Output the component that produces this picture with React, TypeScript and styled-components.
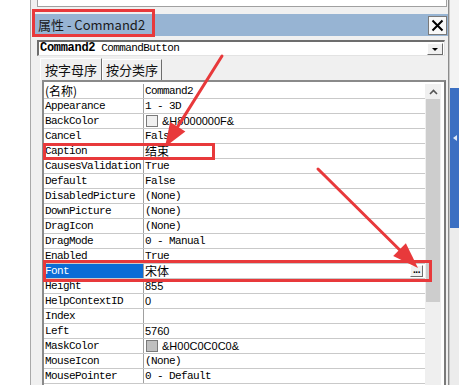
import React from "react";
import styled, { createGlobalStyle } from "styled-components";

const GlobalStyle = createGlobalStyle`
  html, body { margin: 0; padding: 0; background: #ffffff; }
  body { width: 459px; height: 385px; overflow: hidden; }
  * { box-sizing: border-box; }
`;

const MONO = `"Liberation Mono", "DejaVu Sans Mono", monospace`;
const CJK = `"Noto Sans CJK SC", "Noto Sans", sans-serif`;
const SANS = `"Liberation Sans", Arial, sans-serif`;
const RED = "#e8393b";

const Screen = styled.div`
  position: relative;
  width: 459px;
  height: 385px;
  overflow: hidden;
  display: flex;
  background: #ffffff;
`;

const LeftGap = styled.div`
  width: 30px;
  flex: none;
  background: #ffffff;
`;

const Panel = styled.div`
  width: 419px;
  flex: none;
  background: #f0f0f0;
  border-left: 1px solid #a9a9a9;
  border-right: 1px solid #8c8c8c;
  display: flex;
  flex-direction: column;
`;

const RightStrip = styled.div`
  flex: 1;
  display: flex;
  flex-direction: column;
  border-left: 1px solid #c8c8c8;
`;

const StripTop = styled.div`
  height: 88px;
  background: #f3f3f3;
`;

const StripBlue = styled.div`
  height: 140px;
  background: #3b6fc2;
  display: flex;
  align-items: center;
  justify-content: center;
  padding-bottom: 40px;
`;

const StripArrow = styled.div`
  width: 0;
  height: 0;
  border-top: 3px solid transparent;
  border-bottom: 3px solid transparent;
  border-right: 4px solid #dfe8f6;
`;

const StripBottom = styled.div`
  flex: 1;
  background: #ececec;
`;

const TopBox = styled.div`
  margin-left: 6px;
  width: 410px;
  height: 7px;
  background: #ffffff;
  border-left: 1px solid #a0a0a0;
  border-right: 1px solid #a0a0a0;
  border-bottom: 1px solid #a0a0a0;
`;

const TitleBar = styled.div`
  margin-top: 7px;
  margin-left: 2px;
  height: 22px;
  background: #97b4d3;
  display: flex;
  align-items: center;
  padding-left: 5px;
  padding-right: 1px;
`;

const TitleText = styled.div`
  flex: 1;
  font-family: ${CJK};
  font-size: 13px;
  color: #1a1a1a;
  line-height: 22px;
`;

const CloseButton = styled.div`
  width: 19px;
  height: 19px;
  background: #f8f8f8;
  border: 1px solid #7a7a7a;
  display: flex;
  align-items: center;
  justify-content: center;
`;

const Combo = styled.div`
  margin-top: 4px;
  margin-left: 6px;
  width: 408px;
  height: 16px;
  background: #ffffff;
  border-top: 2px solid #6d6d6d;
  border-left: 2px solid #6d6d6d;
  border-right: 1px solid #e3e3e3;
  border-bottom: 1px solid #e3e3e3;
  display: flex;
  align-items: center;
  padding-left: 1px;
`;

const ComboText = styled.div`
  flex: 1;
  font-family: ${MONO};
  font-size: 11px;
  letter-spacing: -0.6px;
  color: #000;
  white-space: pre;
  line-height: 13px;
`;

const ComboBold = styled.span`
  font-weight: bold;
  font-size: 12px;
  letter-spacing: -0.3px;
`;

const DropButton = styled.div`
  width: 16px;
  height: 12px;
  margin-right: 1px;
  background: #f0f0f0;
  border-top: 1px solid #ffffff;
  border-left: 1px solid #ffffff;
  border-right: 1px solid #6d6d6d;
  border-bottom: 1px solid #6d6d6d;
  display: flex;
  align-items: center;
  justify-content: center;
`;

const DropTriangle = styled.div`
  width: 0;
  height: 0;
  border-left: 3px solid transparent;
  border-right: 3px solid transparent;
  border-top: 3px solid #000;
  margin-top: 1px;
`;

const TabRow = styled.div`
  margin-top: 2px;
  margin-left: 9px;
  height: 22px;
  display: flex;
  align-items: stretch;
`;

const Tab = styled.div<{ $active?: boolean }>`
  padding: 0 ${(p) => (p.$active ? "4px" : "3px")};
  font-family: ${CJK};
  font-size: 13px;
  color: #111;
  display: flex;
  align-items: center;
  border-top: 1px solid #ffffff;
  border-left: 1px solid #ffffff;
  border-right: 1px solid #6d6d6d;
  margin-top: ${(p) => (p.$active ? "0" : "1px")};
  line-height: 20px;
`;

const Grid = styled.div`
  margin-left: 11px;
  width: 404px;
  flex: 1;
  border-top: 2px solid #8a8a8a;
  border-left: 2px solid #8a8a8a;
  border-right: 2px solid #7a7a7a;
  background: #ffffff;
  display: flex;
  padding-top: 2px;
  padding-right: 3px;
`;

const Rows = styled.div`
  width: 381px;
  display: flex;
  flex-direction: column;
`;

const Row = styled.div`
  height: 15px;
  flex: none;
  display: flex;
  border-bottom: 1px solid #c9c9c9;
`;

const NameCell = styled.div<{ $selected?: boolean }>`
  width: 100px;
  flex: none;
  display: flex;
  align-items: center;
  border-right: 1px solid #a0a0a0;
  background: ${(p) => (p.$selected ? "#0c6cd6" : "transparent")};
  color: ${(p) => (p.$selected ? "#ffffff" : "#000000")};
  font-family: ${MONO};
  font-size: 11px;
  letter-spacing: -0.6px;
  line-height: 14px;
  padding-left: 1px;
  white-space: nowrap;
`;

const ValueCell = styled.div`
  flex: 1;
  display: flex;
  align-items: center;
  padding-left: 1px;
  padding-right: 2px;
  font-family: ${MONO};
  font-size: 11px;
  letter-spacing: -0.6px;
  line-height: 14px;
  color: #000;
  white-space: nowrap;
`;

const CjkText = styled.span`
  font-family: ${CJK};
  font-size: 12px;
  letter-spacing: 0;
  line-height: 14px;
`;

const SansText = styled.span`
  font-family: ${SANS};
  font-size: 11px;
  letter-spacing: 0;
`;

const Swatch = styled.span<{ $color: string }>`
  display: inline-block;
  width: 12px;
  height: 12px;
  margin-right: 4px;
  margin-left: 1px;
  background: ${(p) => p.$color};
  border: 1px solid #7a7a7a;
  flex: none;
`;

const Spacer = styled.span`
  flex: 1;
`;

const EllipsisButton = styled.div`
  width: 13px;
  height: 12px;
  background: #f0f0f0;
  border-top: 1px solid #ffffff;
  border-left: 1px solid #ffffff;
  border-right: 1px solid #6d6d6d;
  border-bottom: 1px solid #6d6d6d;
  font-family: ${SANS};
  font-size: 10px;
  font-weight: bold;
  line-height: 8px;
  text-align: center;
  letter-spacing: -0.5px;
  color: #000;
`;

const ScrollBar = styled.div`
  width: 16px;
  flex: none;
  display: flex;
  flex-direction: column;
  background: #efefef;
`;

const ScrollUp = styled.div`
  height: 15px;
  background: #f0f0f0;
  display: flex;
  align-items: center;
  justify-content: center;
`;

const ScrollThumb = styled.div`
  height: 203px;
  margin: 0 1px;
  background: #cdcdcd;
`;

const Overlay = styled.svg`
  position: absolute;
  left: 0;
  top: 0;
  pointer-events: none;
`;

const Highlight = styled.div<{ $x: number; $y: number; $w: number; $h: number }>`
  position: absolute;
  left: ${(p) => p.$x}px;
  top: ${(p) => p.$y}px;
  width: ${(p) => p.$w}px;
  height: ${(p) => p.$h}px;
  border: 3px solid ${RED};
  pointer-events: none;
`;

type Prop = {
  name: React.ReactNode;
  value?: React.ReactNode;
  selected?: boolean;
};

const props: Prop[] = [
  { name: <CjkText>(名称)</CjkText>, value: "Command2" },
  { name: "Appearance", value: "1 - 3D" },
  {
    name: "BackColor",
    value: (
      <>
        <Swatch $color="#f0f0f0" />
        <SansText>&amp;H8000000F&amp;</SansText>
      </>
    ),
  },
  { name: "Cancel", value: "False" },
  { name: "Caption", value: <CjkText>结束</CjkText> },
  { name: "CausesValidation", value: "True" },
  { name: "Default", value: "False" },
  { name: "DisabledPicture", value: "(None)" },
  { name: "DownPicture", value: "(None)" },
  { name: "DragIcon", value: "(None)" },
  { name: "DragMode", value: "0 - Manual" },
  { name: "Enabled", value: "True" },
  {
    name: "Font",
    selected: true,
    value: (
      <>
        <CjkText>宋体</CjkText>
        <Spacer />
        <EllipsisButton>...</EllipsisButton>
      </>
    ),
  },
  { name: "Height", value: <SansText>855</SansText> },
  { name: "HelpContextID", value: <SansText>0</SansText> },
  { name: "Index", value: "" },
  { name: "Left", value: <SansText>5760</SansText> },
  {
    name: "MaskColor",
    value: (
      <>
        <Swatch $color="#c0c0c0" />
        <SansText>&amp;H00C0C0C0&amp;</SansText>
      </>
    ),
  },
  { name: "MouseIcon", value: "(None)" },
  { name: "MousePointer", value: "0 - Default" },
];

function arrowHead(x1: number, y1: number, tx: number, ty: number, len: number, half: number) {
  const dx = tx - x1;
  const dy = ty - y1;
  const l = Math.hypot(dx, dy);
  const ux = dx / l;
  const uy = dy / l;
  const bx = tx - ux * len;
  const by = ty - uy * len;
  const px = -uy;
  const py = ux;
  return {
    points: `${tx},${ty} ${bx + px * half},${by + py * half} ${bx - px * half},${by - py * half}`,
    bx,
    by,
  };
}

export default function App() {
  const a1 = arrowHead(222, 56, 165, 147, 24, 9);
  const a2 = arrowHead(318, 169, 418, 268, 26, 9);
  return (
    <>
      <GlobalStyle />
      <Screen>
        <LeftGap />
        <Panel>
          <TopBox />
          <TitleBar>
            <TitleText>属性 - Command2</TitleText>
            <CloseButton>
              <svg width="13" height="13" viewBox="0 0 13 13">
                <path d="M1.5 1.5 L11.5 11.5 M11.5 1.5 L1.5 11.5" stroke="#000" strokeWidth="2" />
              </svg>
            </CloseButton>
          </TitleBar>
          <Combo>
            <ComboText>
              <ComboBold>Command2</ComboBold> CommandButton
            </ComboText>
            <DropButton>
              <DropTriangle />
            </DropButton>
          </Combo>
          <TabRow>
            <Tab $active>按字母序</Tab>
            <Tab>按分类序</Tab>
          </TabRow>
          <Grid>
            <Rows>
              {props.map((p, i) => (
                <Row key={i}>
                  <NameCell $selected={p.selected}>{p.name}</NameCell>
                  <ValueCell>{p.value}</ValueCell>
                </Row>
              ))}
            </Rows>
            <ScrollBar>
              <ScrollUp>
                <svg width="9" height="6" viewBox="0 0 9 6">
                  <path d="M1 5 L4.5 1.5 L8 5" fill="none" stroke="#555" strokeWidth="1.6" />
                </svg>
              </ScrollUp>
              <ScrollThumb />
            </ScrollBar>
          </Grid>
        </Panel>
        <RightStrip>
          <StripTop />
          <StripBlue>
            <StripArrow />
          </StripBlue>
          <StripBottom />
        </RightStrip>

        <Highlight $x={32} $y={9} $w={123} $h={28} />
        <Highlight $x={43} $y={143} $w={172} $h={17} />
        <Highlight $x={43} $y={260} $w={389} $h={22} />

        <Overlay width="459" height="385" viewBox="0 0 459 385">
          <line x1="222" y1="56" x2={a1.bx} y2={a1.by} stroke={RED} strokeWidth="3" strokeLinecap="round" />
          <polygon points={a1.points} fill={RED} />
          <line x1="318" y1="169" x2={a2.bx} y2={a2.by} stroke={RED} strokeWidth="3" strokeLinecap="round" />
          <polygon points={a2.points} fill={RED} />
        </Overlay>
      </Screen>
    </>
  );
}
